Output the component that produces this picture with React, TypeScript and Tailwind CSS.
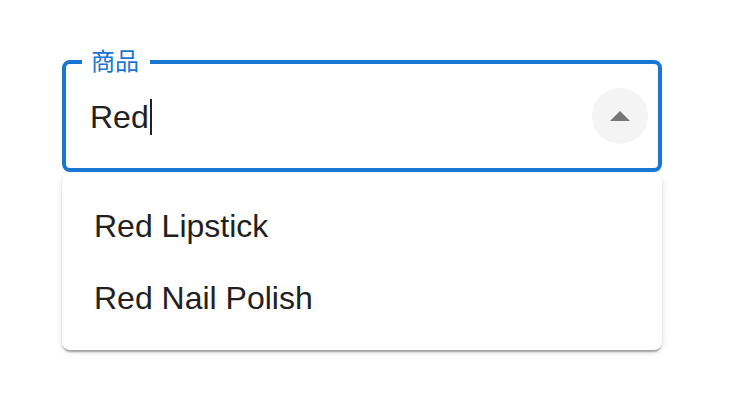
const options = ['Red Lipstick', 'Red Nail Polish'];

function ArrowUpIcon() {
  return (
    <svg viewBox="0 0 20 10" className="w-[20px] h-[10px]" fill="#757575">
      <path d="M0 10 L10 0 L20 10 Z" />
    </svg>
  );
}

export default function App() {
  return (
    <div
      className="w-[734px] h-[412px] bg-white pt-[60px] pl-[62px]"
      style={{ fontFamily: '"Liberation Sans", Arial, "Noto Sans CJK JP", sans-serif' }}
    >
      <div className="w-[600px]">
        {/* input */}
        <div className="relative h-[112px] rounded-[8px] border-[4px] border-[#1976d2] flex items-center pl-[24px] pr-[10px]">
          <span
            className="absolute -top-[16px] left-[16px] h-[24px] leading-[24px] pl-[9px] pr-[11px] bg-white text-[24px] text-[#1976d2]"
            style={{ fontFamily: '"Noto Sans CJK JP", "Noto Sans CJK SC", sans-serif' }}
          >
            商品
          </span>
          <div className="flex-1 flex items-center pt-[2px]">
            <span className="text-[32px] leading-[32px] text-[#212121]">Red</span>
            <span className="w-[2px] h-[36px] bg-[#222] ml-[1px]" />
          </div>
          <div className="w-[56px] h-[56px] rounded-full bg-[#f4f4f4] flex items-center justify-center">
            <ArrowUpIcon />
          </div>
        </div>

        {/* listbox */}
        <div className="mt-[2px] rounded-[8px] bg-white py-[16px] shadow-[0_4px_2px_-2px_rgba(0,0,0,0.2),0_2px_2px_0_rgba(0,0,0,0.14),0_2px_6px_0_rgba(0,0,0,0.12)]">
          {options.map(option => (
            <div key={option} className="h-[72px] flex items-center px-[32px] text-[32px] leading-[48px] text-[#212121]">
              {option}
            </div>
          ))}
        </div>
      </div>
    </div>
  );
}
